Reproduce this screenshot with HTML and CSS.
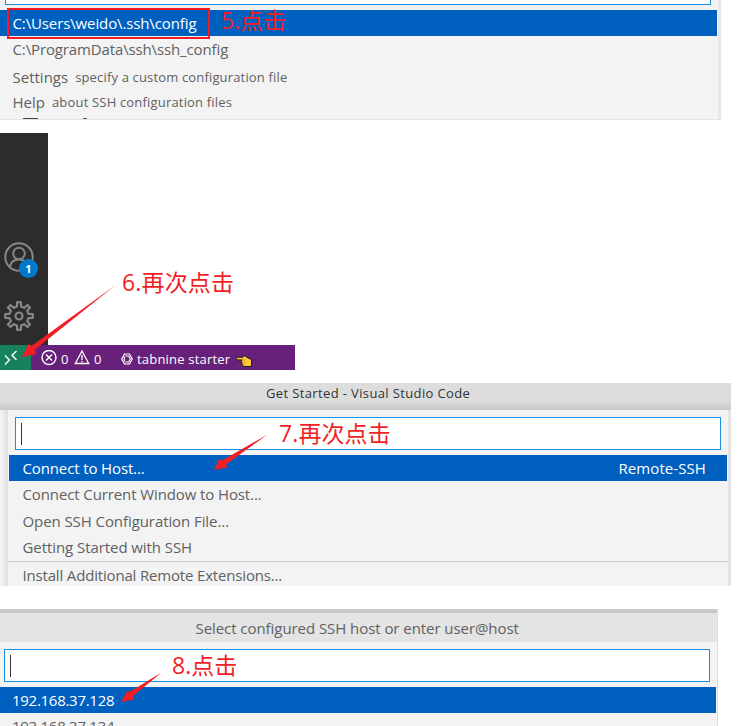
FILE: index.html
```
<!DOCTYPE html>
<html lang="zh-CN">
<head>
<meta charset="utf-8">
<title>Remote SSH setup</title>
<link rel="stylesheet" href="styles.css">
</head>
<body>
<main class="guide">
  <section class="config-picker">
    <div class="input-edge"></div>
    <div class="row selected"><span class="path-active">C:\Users\weido\.ssh\config</span></div>
    <div class="row"><span class="path">C:\ProgramData\ssh\ssh_config</span></div>
    <div class="row third"><span>Settings</span><small class="settings-note">specify a custom configuration file</small></div>
    <div class="row fourth"><span>Help</span><small class="help-note">about SSH configuration files</small></div>
    <div class="clipped"><i></i><b></b></div>
  </section>

  <section class="workbench">
    <div class="activity-bar">
      <div class="account">
        <svg width="32" height="32" viewBox="0 0 32 32" fill="none" stroke="#868686" stroke-width="2"><circle cx="16" cy="15" r="13.700"/><circle cx="16" cy="11.500" r="5.800"/><path d="M7 25c.7-5 4.200-7.500 9-7.500s8.300 2.500 9 7.500"/></svg>
        <span class="badge">1</span>
      </div>
      <svg class="gear" width="32" height="32" viewBox="-16 -16 32 32" fill="none" stroke="#868686" stroke-width="2.200" stroke-linejoin="round"><path d="M-2.100-9.500L-1.800-13.800H1.800L2.100-9.500L5.200-8.200L8.500-11L11-8.500L8.200-5.200L9.500-2.100L13.800-1.800V1.800L9.500 2.100L8.200 5.200L11 8.500L8.500 11L5.200 8.200L2.100 9.500L1.800 13.800H-1.800L-2.100 9.500L-5.200 8.200L-8.500 11L-11 8.500L-8.200 5.200L-9.500 2.100L-13.800 1.800V-1.800L-9.500-2.100L-8.200-5.200L-11-8.500L-8.500-11L-5.200-8.200Z"/><circle r="3.500"/></svg>
    </div>
    <div class="status-bar">
      <span class="remote"><svg width="14" height="16" viewBox="0 0 14 16" fill="none" stroke="#fff" stroke-width="1.400"><path d="M1 5.500l4.500 4.500L1 14.500M12.500 1L8 5.300l4.500 4.500"/></svg></span>
      <svg class="error" width="16" height="16" viewBox="0 0 16 16" fill="none" stroke="#fff" stroke-width="1.400"><circle cx="8" cy="7.500" r="7"/><path d="M5 4.500l6 6M11 4.500l-6 6"/></svg>
      <span class="count">0</span>
      <svg class="warning" width="16" height="16" viewBox="0 0 16 16" fill="none" stroke="#fff" stroke-width="1.300"><path d="M8 1L14.700 13.500H1.300zM8 5v5M8 10.800v1.500"/></svg>
      <span class="count">0</span>
      <svg class="hex" width="12" height="14" viewBox="0 0 12 14" fill="none" stroke="#fff" stroke-width="1.200"><path d="M3.500 2h5L11.300 7l-2.800 5h-5L.7 7z"/><path d="M4.300 4h3.400l1.700 3-1.700 3H4.300M3.300 4.500v5"/></svg>
      <span class="tabnine">tabnine starter</span>
      <svg class="hand" width="16" height="13" viewBox="0 0 16 13"><path d="M1 2.200h6l1-1.700 5 3 2.500 1v7H7.500L5.700 9l.5-1-1-1.500.8-1.600H1Q-.3 3.500 1 2.200z" fill="#ffc83d" stroke="#241b18" stroke-width="1"/><path d="M6.500 5h3M6.500 7.300h3M7 9.500h2.500" stroke="#d67d00" stroke-width=".6"/></svg>
    </div>
  </section>

  <section class="window">
    <header class="title-bar"><span>Get Started - Visual Studio Code</span></header>
    <div class="window-body">
      <div class="palette">
        <div class="input"><i class="caret"></i></div>
        <div class="row selected"><span class="connect">Connect to Host...</span><span class="source">Remote-SSH</span></div>
        <div class="row"><span class="current">Connect Current Window to Host...</span></div>
        <div class="row open-config"><span class="open">Open SSH Configuration File...</span></div>
        <div class="row"><span class="started">Getting Started with SSH</span></div>
        <div class="row install"><span class="ext">Install Additional Remote Extensions...</span></div>
      </div>
    </div>
  </section>

  <section class="host-picker">
    <header class="host-title"><span>Select configured SSH host or enter user@host</span></header>
    <div class="input"><i class="caret"></i></div>
    <div class="row selected"><span class="ip">192.168.37.128</span></div>
    <div class="row"><span class="ip">192.168.37.134</span></div>
  </section>

  <div class="outline"></div>
  <svg class="arrows" width="739" height="726" viewBox="0 0 739 726" fill="#f11e25">
    <path d="M115 285.500L34.500 350 36 354 21.700 357 29 344 31.500 346z"/>
    <path d="M267.500 434.500L226 464.500 227.500 467.500 214 470 219.500 458.500 222 460.500z"/>
    <path d="M161.500 672.500L132.500 696.500 134.500 699.500 121 702 127.500 690.500 129.500 692z"/>
  </svg>
  <span class="note n5">5.点击</span>
  <span class="note n6">6.再次点击</span>
  <span class="note n7">7.再次点击</span>
  <span class="note n8">8.点击</span>
</main>
</body>
</html>
```
FILE: styles.css
```
* { box-sizing: border-box; }
body { margin: 0; background: #fff; overflow: hidden; }
.guide { position: relative; width: 739px; height: 726px; overflow: hidden; font: 15px/26px "Open Sans", "Noto Sans", sans-serif; color: #616161; }
svg { display: block; flex: none; }
.row { display: flex; align-items: center; height: 26px; white-space: nowrap; }
.row.selected { background: #0060c0; color: #fff; }
.input { height: 33px; border: 1px solid #1590e5; background: #fff; padding: 5px; }
.caret { display: block; width: 1px; height: 22px; background: #333; }

.config-picker { width: 721px; height: 120px; background: #f3f3f3; border-right: 3px solid #e7e7e7; border-bottom: 1px solid #e3e3e3; overflow: hidden; }
.input-edge { width: 706px; height: 5px; margin: 0 0 5px 5px; border: 1px solid #1590e5; border-top: 0; background: #fff; }
.config-picker .row { padding-left: 12.5px; margin-right: 1px; }
.config-picker .third { margin-top: 2px; height: 25px; }
.path-active { letter-spacing: -.12px; }
.path { letter-spacing: -.13px; }
.config-picker small { font-size: 13px; margin-left: 7px; }
.settings-note { letter-spacing: .16px; }
.help-note { letter-spacing: .18px; }
.clipped { display: flex; gap: 45px; padding: 3px 0 0 23px; }
.clipped i { width: 15px; height: 1px; background: #444; }
.clipped b { width: 4px; height: 1px; background: #555; }

.workbench { margin-top: 13px; }
.activity-bar { width: 48px; height: 212px; background: #2c2c2c; padding: 109px 0 0 3px; }
.account { position: relative; height: 32px; }
.badge { position: absolute; left: 16px; top: 17px; width: 19px; height: 19px; border-radius: 50%; background: #007acc; color: #fff; font: bold 11px/19px "Open Sans", sans-serif; text-align: center; }
.gear { margin-top: 26px; }
.status-bar { display: flex; align-items: center; width: 295px; height: 25px; background: #68217a; color: #fff; font-size: 13px; white-space: nowrap; }
.remote { display: flex; align-items: center; width: 31px; height: 25px; background: #16825d; padding-left: 4px; }
.error { margin: 0 4px 0 10px; }
.count { width: 8px; padding-top: 2px; }
.warning { margin: 0 4px 0 5px; }
.hex { margin: 2px 4px 0 19px; }
.tabnine { letter-spacing: .2px; padding-top: 2px; }
.hand { margin: 7px 0 0 6px; }

.window { width: 731px; height: 203px; margin-top: 13px; overflow: hidden; }
.title-bar { height: 27px; background: linear-gradient(#ddd 0 17px, #c9c9c9); color: #333; font-size: 13px; line-height: 21px; letter-spacing: .37px; padding-left: 266px; white-space: nowrap; }
.window-body { display: flex; height: 176px; padding: 0 3px 0 8px; background: linear-gradient(90deg, #f5f5f5, #dedede 8px, #e5e5e5); }
.palette { width: 720px; height: 176px; background: #f3f3f3; padding-top: 7px; }
.palette .input { width: 706px; margin: 0 0 5px 7px; }
.palette .row { padding-left: 14.5px; }
.palette .selected { margin: 0 1px; padding: 0 21px 0 13.5px; justify-content: space-between; }
.connect { letter-spacing: -.13px; }
.source { letter-spacing: .08px; }
.current { letter-spacing: -.11px; }
.open { letter-spacing: -.08px; }
.started { letter-spacing: -.07px; }
.ext { letter-spacing: -.17px; }
.palette .open-config { margin-top: 1px; }
.palette .install { border-top: 1px solid #c6cad8; height: 27px; margin-top: 1px; }

.host-picker { width: 718px; height: 117px; margin-top: 23px; background: #f3f3f3; border-right: 1px solid #ddd; overflow: hidden; }
.host-title { height: 33px; border-top: 4px solid #c8c8c8; background: #e4e4e4; padding-left: 195.5px; line-height: 31px; letter-spacing: -.06px; white-space: nowrap; }
.host-picker .input { width: 706px; margin: 7px 0 5px 4px; }
.host-picker .row { padding-left: 12px; margin-right: 1px; }
.ip { letter-spacing: -.28px; }

.outline { position: absolute; left: 7px; top: 8px; width: 203px; height: 31px; border: 2px solid #ee1c24; }
.arrows { position: absolute; left: 0; top: 0; }
.note { position: absolute; color: #f11e25; font: 23px/28px "Open Sans", "Noto Sans CJK SC", sans-serif; white-space: nowrap; }
.n5 { left: 221px; top: 6px; }
.n6 { left: 122px; top: 268px; letter-spacing: .15px; }
.n7 { left: 279px; top: 419px; letter-spacing: .1px; }
.n8 { left: 172px; top: 651px; }
```
